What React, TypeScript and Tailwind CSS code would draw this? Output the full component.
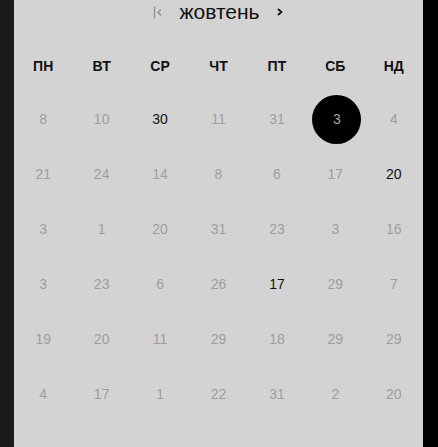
import React from 'react';

type Day = { n: number; dark?: boolean; selected?: boolean };

const weekdays = ['пн', 'вт', 'ср', 'чт', 'пт', 'сб', 'нд'];

// days as shown in the grid, row by row
const rows: Day[][] = [
  [{ n: 8 }, { n: 10 }, { n: 30, dark: true }, { n: 11 }, { n: 31 }, { n: 3, selected: true }, { n: 4 }],
  [{ n: 21 }, { n: 24 }, { n: 14 }, { n: 8 }, { n: 6 }, { n: 17 }, { n: 20, dark: true }],
  [{ n: 3 }, { n: 1 }, { n: 20 }, { n: 31 }, { n: 23 }, { n: 3 }, { n: 16 }],
  [{ n: 3 }, { n: 23 }, { n: 6 }, { n: 26 }, { n: 17, dark: true }, { n: 29 }, { n: 7 }],
  [{ n: 19 }, { n: 20 }, { n: 11 }, { n: 29 }, { n: 18 }, { n: 29 }, { n: 29 }],
  [{ n: 4 }, { n: 17 }, { n: 1 }, { n: 22 }, { n: 31 }, { n: 2 }, { n: 20 }],
];

const App = () => {
  return (
    <div className="flex h-[447px] w-full overflow-hidden font-['Liberation_Sans',Arial,sans-serif]">
      <div className="w-[14px] bg-[#1a1a1a]" />
      <div className="flex-1 bg-[#d3d3d3]">
        {/* month header */}
        <div className="flex h-[24px] items-center justify-center">
          <button className="mr-[16px] flex items-center text-[#8e8e8e]">
            <svg width="10" height="14" viewBox="0 0 10 14" fill="none">
              <path d="M1.5 1.5v12" stroke="#8e8e8e" strokeWidth="1.3" />
              <path d="M7.5 5l-2.5 2.5 2.5 2.5" stroke="#8e8e8e" strokeWidth="1.5" strokeLinecap="round" strokeLinejoin="round" />
            </svg>
          </button>
          <span className="text-[21px] leading-none text-[#111] -mt-[2px]">жовтень</span>
          <button className="ml-[16px] flex items-center">
            <svg width="8" height="14" viewBox="0 0 8 14" fill="none">
              <path d="M2.5 4.5l3 2.5-3 2.5" stroke="#111" strokeWidth="1.8" strokeLinecap="round" strokeLinejoin="round" />
            </svg>
          </button>
        </div>

        {/* weekday names */}
        <div className="mt-[24px] grid h-[36px] grid-cols-7 items-center">
          {weekdays.map((d) => (
            <div key={d} className="text-center text-[14px] font-bold uppercase text-[#111]">
              {d}
            </div>
          ))}
        </div>

        {/* dates */}
        <div className="mt-[8px]">
          {rows.map((row, ri) => (
            <div key={ri} className="grid h-[55px] grid-cols-7 items-center">
              {row.map((day, di) => (
                <div key={di} className="flex justify-center">
                  {day.selected ? (
                    <span className="flex h-[49px] w-[49px] items-center justify-center rounded-full bg-black text-[14px] text-[#a8a8a8] ml-[3px]">
                      {day.n}
                    </span>
                  ) : (
                    <span className={`text-[14px] ${day.dark ? 'text-[#111]' : 'text-[#9e9e9e]'}`}>{day.n}</span>
                  )}
                </div>
              ))}
            </div>
          ))}
        </div>
      </div>
      <div className="w-[15px] bg-black" />
    </div>
  );
};

export default App;
